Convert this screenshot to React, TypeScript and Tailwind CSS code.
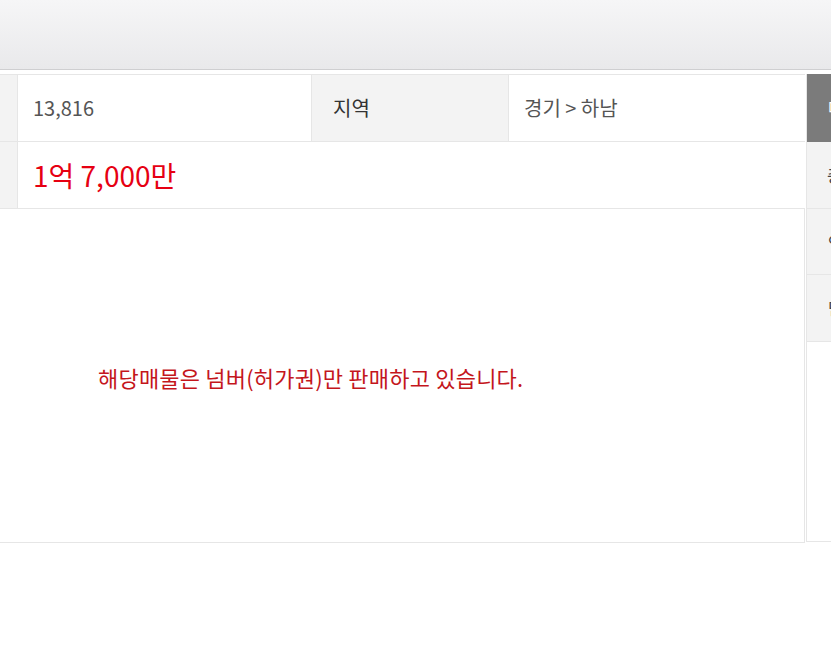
export default function App() {
  const font = { fontFamily: '"Noto Sans CJK KR", "Noto Sans", sans-serif' };

  return (
    <div className="w-[831px] h-[672px] overflow-hidden bg-white" style={font}>
      {/* top bar */}
      <div className="h-[70px] bg-gradient-to-b from-[#f6f6f7] to-[#e9e9eb] border-b border-[#cfcfd1]" />

      <div className="flex mt-[4px]">
        {/* left table */}
        <div className="w-[805px] shrink-0">
          <div className="flex h-[68px] border-t border-b border-[#e6e6e6]">
            <div className="w-[18px] shrink-0 bg-[#f3f3f3] border-r border-[#e6e6e6]" />
            <div className="w-[294px] shrink-0 flex items-center pl-[15px] text-[20px] text-[#555] border-r border-[#e6e6e6]">
              13,816
            </div>
            <div className="w-[197px] shrink-0 flex items-center pl-[21px] text-[20px] text-[#333] bg-[#f3f3f3] border-r border-[#e6e6e6]">
              지역
            </div>
            <div className="flex-1 flex items-center pl-[15px] text-[20px] text-[#555]">
              경기 &gt; 하남
            </div>
          </div>
          <div className="flex h-[67px] border-b border-[#e6e6e6]">
            <div className="w-[18px] shrink-0 bg-[#f3f3f3] border-r border-[#e6e6e6]" />
            <div className="flex-1 flex items-center pl-[15px] text-[28px] text-[#e60012]">
              1억 7,000만
            </div>
          </div>
          <div className="h-[334px] flex items-center pl-[98px] pt-[4px] border-b border-r border-[#e6e6e6]">
            <span className="text-[22px] tracking-[0.2px] text-[#c4161c]">
              해당매물은 넘버(허가권)만 판매하고 있습니다.
            </span>
          </div>
        </div>

        {/* right column (cut off) */}
        <div className="flex-1 ml-[1px] border-l border-[#e6e6e6] h-[468px] overflow-hidden whitespace-nowrap">
          <div className="h-[68px] bg-[#7b7b7b] flex items-center pl-[21px] text-[17px] text-white">
            매물정보
          </div>
          <div className="h-[67px] bg-[#f3f3f3] border-b border-[#e6e6e6] flex items-center pl-[20px] text-[17px] text-[#444]">
            총 매물
          </div>
          <div className="h-[66px] bg-[#f3f3f3] border-b border-[#e6e6e6] flex items-center pl-[21px] text-[17px] text-[#444]">
            연락처
          </div>
          <div className="h-[67px] bg-[#f3f3f3] border-b border-[#e6e6e6] flex items-center pl-[21px] text-[17px] text-[#444]">
            담당자
          </div>
          <div className="h-[200px] border-b border-[#e6e6e6]" />
        </div>
      </div>
    </div>
  );
}
